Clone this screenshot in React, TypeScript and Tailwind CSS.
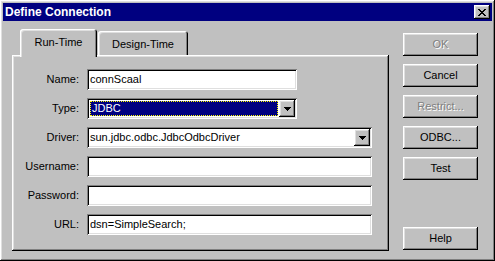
import React from 'react'

const raised =
  'shadow-[inset_-1px_-1px_#000,inset_1px_1px_#fff,inset_-2px_-2px_#808080,inset_2px_2px_#dfdfdf]'
const sunken =
  'shadow-[inset_1px_1px_#808080,inset_-1px_-1px_#fff,inset_2px_2px_#000,inset_-2px_-2px_#dfdfdf]'

const closeGlyph = ['11....11', '.11..11.', '..1111..', '...11...', '..1111..', '.11..11.', '11....11']

function CloseIcon(): React.JSX.Element {
  return (
    <svg width="8" height="7" viewBox="0 0 8 7" shapeRendering="crispEdges">
      {closeGlyph.map((row, y) =>
        row.split('').map((c, x) => (c === '1' ? <rect key={`${x}-${y}`} x={x} y={y} width="1" height="1" fill="#000" /> : null)),
      )}
    </svg>
  )
}

function Arrow(): React.JSX.Element {
  return (
    <svg width="7" height="4" viewBox="0 0 7 4" shapeRendering="crispEdges">
      <rect x="0" y="0" width="7" height="1" fill="#000" />
      <rect x="1" y="1" width="5" height="1" fill="#000" />
      <rect x="2" y="2" width="3" height="1" fill="#000" />
      <rect x="3" y="3" width="1" height="1" fill="#000" />
    </svg>
  )
}

function DropButton(): React.JSX.Element {
  return (
    <div className={`flex h-[17px] w-[16px] shrink-0 items-center justify-center bg-[#c0c0c0] ${raised}`}>
      <Arrow />
    </div>
  )
}

function Button({ label, disabled = false, className = '' }: { label: string; disabled?: boolean; className?: string }) {
  return (
    <div
      className={`flex h-[23px] w-[75px] items-center justify-center pb-[1px] bg-[#c0c0c0] ${raised} ${
        disabled ? 'text-[#808080] [text-shadow:1px_1px_#fff]' : 'text-black'
      } ${className}`}
    >
      {label}
    </div>
  )
}

function Row({ label, children }: { label: string; children: React.ReactNode }) {
  return (
    <div className="flex h-[21px] items-center">
      <span className="w-[67px] text-right">{label}</span>
      <div className="ml-[8px] h-full">{children}</div>
    </div>
  )
}

function TextField({ value = '', wide = false }: { value?: string; wide?: boolean }) {
  return (
    <div className={`flex h-full items-center bg-white pl-[3px] ${sunken} ${wide ? 'w-[285px]' : 'w-[210px]'}`}>
      {value}
    </div>
  )
}

export default function App(): React.JSX.Element {
  return (
    <div
      className={`h-[261px] w-[495px] bg-[#c0c0c0] p-[3px] text-[11px] leading-[13px] text-black ${raised}`}
      style={{ fontFamily: '"Liberation Sans", Arial, sans-serif' }}
    >
      <div className="flex h-[18px] items-center justify-between bg-[#000080] pl-[2px] pr-[2px]">
        <span className="text-[12px] leading-[14px] font-bold text-white">Define Connection</span>
        <div className={`flex h-[14px] w-[16px] items-center justify-center bg-[#c0c0c0] ${raised}`}>
          <CloseIcon />
        </div>
      </div>

      <div className="flex h-[237px]">
        <div className="ml-[9px] mt-[8px] flex w-[377px] flex-col">
          <div className="flex h-[26px] items-end pl-[8px]">
            <div
              className="relative z-10 -mb-[2px] flex h-[28px] w-[77px] justify-center rounded-t-[3px] bg-[#c0c0c0] pt-[7px] shadow-[inset_1px_1px_#fff,inset_-1px_0_#000,inset_-2px_0_#808080,inset_2px_2px_#dfdfdf]"
            >
              Run-Time
            </div>
            <div className="ml-[1px] flex h-[24px] w-[90px] justify-center rounded-t-[3px] bg-[#c0c0c0] pt-[7px] shadow-[inset_1px_1px_#fff,inset_-1px_0_#000,inset_-2px_0_#808080,inset_2px_2px_#dfdfdf]">
              Design-Time
            </div>
          </div>

          <div className={`flex h-[196px] flex-col gap-[8px] bg-[#c0c0c0] pt-[14px] ${raised}`}>
            <Row label="Name:">
              <TextField value="connScaal" />
            </Row>
            <Row label="Type:">
              <div className={`flex h-full w-[210px] items-center bg-white p-[2px] ${sunken}`}>
                <div className="ml-[1px] mr-[1px] flex h-[15px] flex-1 items-center border border-dotted border-[#ffff00] bg-[#000080] pl-[1px] text-white">
                  JDBC
                </div>
                <DropButton />
              </div>
            </Row>
            <Row label="Driver:">
              <div className={`flex h-full w-[285px] items-center bg-white p-[2px] ${sunken}`}>
                <span className="flex-1 pl-[1px]">sun.jdbc.odbc.JdbcOdbcDriver</span>
                <DropButton />
              </div>
            </Row>
            <Row label="Username:">
              <TextField wide />
            </Row>
            <Row label="Password:">
              <TextField wide />
            </Row>
            <Row label="URL:">
              <TextField wide value="dsn=SimpleSearch;" />
            </Row>
          </div>
        </div>

        <div className="ml-[14px] mt-[12px] flex h-[217px] flex-col gap-[8px]">
          <Button label="OK" disabled />
          <Button label="Cancel" />
          <Button label="Restrict..." disabled />
          <Button label="ODBC..." />
          <Button label="Test" />
          <Button label="Help" className="mt-auto" />
        </div>
      </div>
    </div>
  )
}
